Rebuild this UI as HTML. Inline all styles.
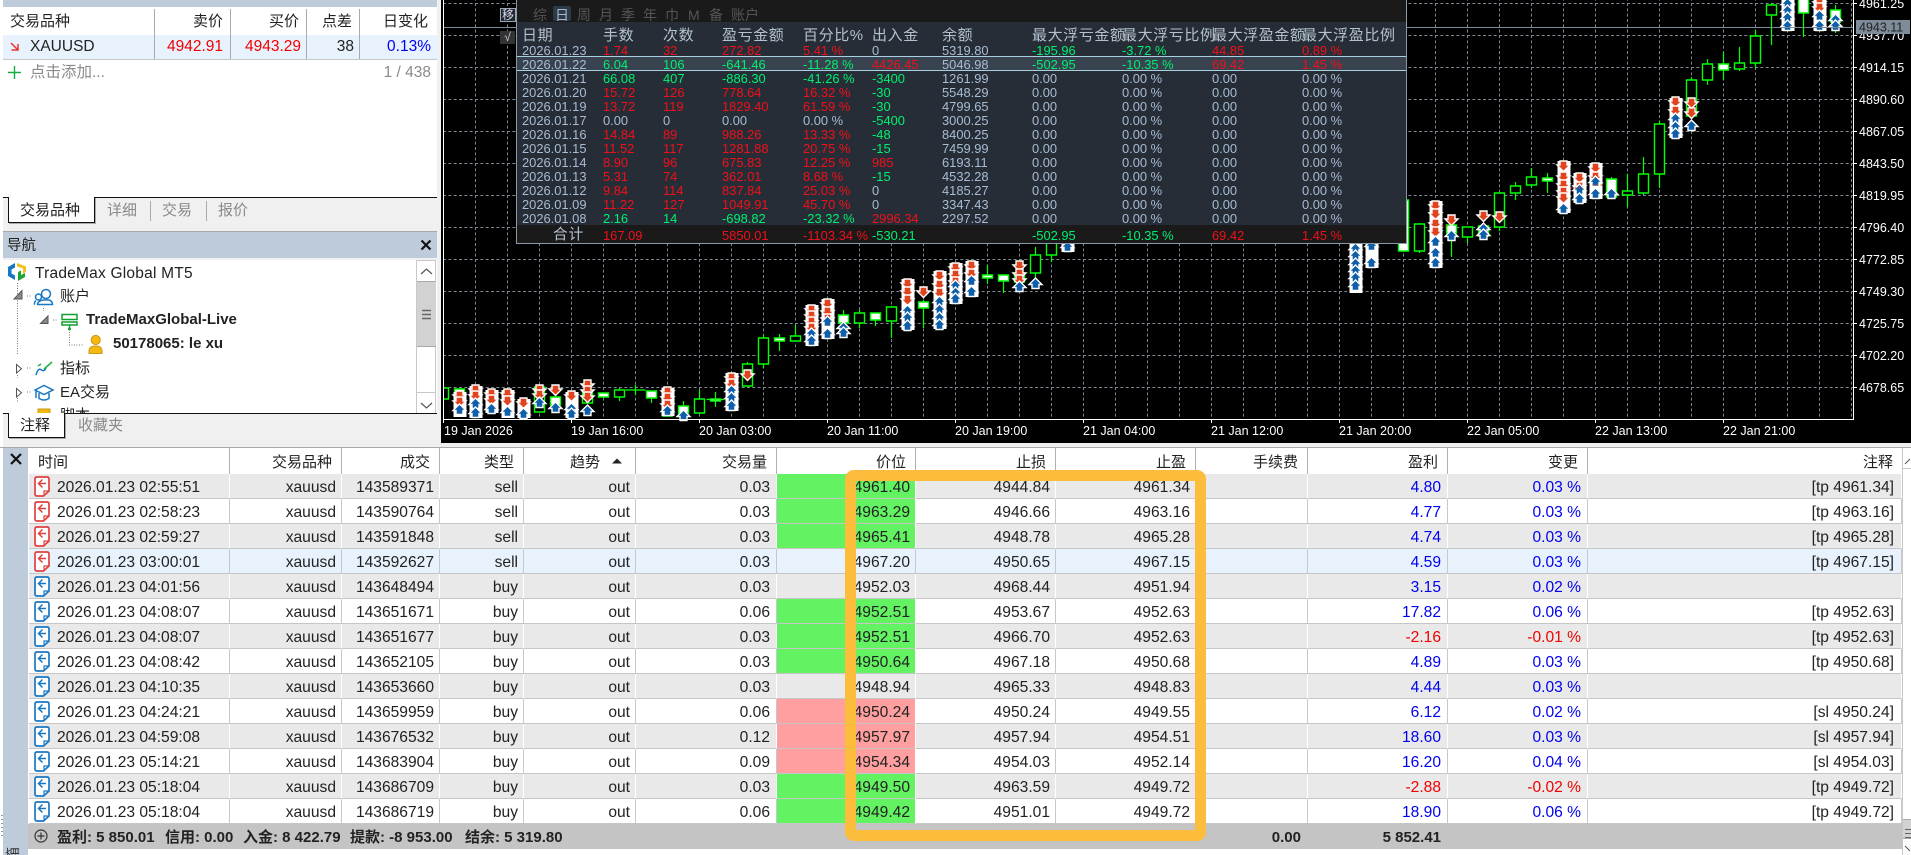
<!DOCTYPE html>
<html lang="zh"><head><meta charset="utf-8"><title>MT5</title>
<style>
html,body{margin:0;padding:0;background:#fff}
body{position:relative;width:1911px;height:855px;overflow:hidden;font:15.5px/20px "Liberation Sans","Noto Sans CJK SC",sans-serif;color:#222}
.a{position:absolute}
.t{position:absolute;white-space:nowrap;line-height:20px}
.rr{text-align:right}
#chart{position:absolute;left:441px;top:0;width:1470px;height:443px;overflow:hidden;background:#000}
#chart text{font:12.5px "Liberation Sans",sans-serif;fill:#fff}
.gy{color:#8a8a8a}
.d{position:absolute;width:1px;background:#aaa}
/* panel */
#pn{position:absolute;left:516px;top:0;width:889px;height:243px;background:#262d36;border:1px solid #8c9aa8;border-top:0}
#pt{position:absolute;left:522px;top:22px;table-layout:fixed;border-spacing:0;width:884px;font:12.9px/14px "Liberation Sans","Noto Sans CJK SC",sans-serif;color:#a8bcd4}
#pt td,#pt th{padding:0;white-space:nowrap;text-align:left;font-weight:400;height:14px}
#pt th{height:21px;box-sizing:border-box;padding-top:6px;font-size:15px;line-height:16px;letter-spacing:.6px;color:#b4c2d0}
#pt tr.f td{height:18px;line-height:19px}
.r{color:#f0101a}.g{color:#00f070}
/* table */
#tb{position:absolute;left:29px;top:448px;table-layout:fixed;border-spacing:0;width:1873px;font-size:15.6px;color:#222}
#tb th{height:26px;padding:4px 9px 0 0;text-align:right;font-weight:400;font-size:15px;border-right:1px solid #b0b0b0;box-sizing:border-box;background:#fff}
#tb td{height:25px;box-sizing:border-box;padding:3px 5px 0 0;text-align:right;white-space:nowrap;overflow:hidden;line-height:21px;border-bottom:1px solid #c6c6c6;border-right:1px solid #c8c8c8;position:relative}
#tb td:nth-child(6),#tb td:nth-child(11),#tb td:nth-child(12){padding-right:6px}
#tb td:nth-child(13){padding-right:7px}
#tb tr.z td{background:#e9e9e9;border-right-color:#fff}
#tb tr.s td{background:#e8f2fc;border-right-color:#c8c8c8}
#tb td.gc{background:#62f262!important;border-right-color:#fff}
#tb td.rc{background:#ff9f9f!important;border-right-color:#fff}
#tb td.tm{text-align:left;padding-left:28px}
#tb td.tm svg{position:absolute;left:5px;top:2px;width:16px;height:21px}
#tb td.b{color:#0000f0}#tb td.n{color:#f00000}
</style></head><body>

<!-- Left top strip -->
<div class="a" style="left:3px;top:0;width:434px;height:7px;background:#bdcbda"></div>
<div class="a" style="left:437px;top:0;width:4px;height:447px;background:#f0f0f0"></div>
<div class="a" style="left:0;top:0;width:3px;height:447px;background:#fff"></div>

<!-- Market watch -->
<div class="t" style="left:10px;top:12px;font-size:15px">交易品种</div>
<div class="t rr" style="right:1688px;top:12px;font-size:15px">卖价</div>
<div class="t rr" style="right:1612px;top:12px;font-size:15px">买价</div>
<div class="t rr" style="right:1559px;top:12px;font-size:15px">点差</div>
<div class="t rr" style="right:1483px;top:12px;font-size:15px">日变化</div>
<div class="a" style="left:3px;top:35px;width:434px;height:24px;background:#e8f2fc;border-bottom:1px solid #c8c8c8"></div>
<div class="d" style="left:154px;top:9px;height:50px"></div>
<div class="d" style="left:230px;top:9px;height:50px"></div>
<div class="d" style="left:306px;top:9px;height:50px"></div>
<div class="d" style="left:359px;top:9px;height:50px"></div>
<svg class="a" style="left:8px;top:40px" width="14" height="14" viewBox="8 40 14 14"><path d="M11 43L18 50M18 44V50H11.500" fill="none" stroke="#e8352f" stroke-width="1.500"/></svg>
<div class="t" style="left:30px;top:37px">XAUUSD</div>
<div class="t rr" style="right:1688px;top:37px;color:#f00000">4942.91</div>
<div class="t rr" style="right:1610px;top:37px;color:#f00000">4943.29</div>
<div class="t rr" style="right:1557px;top:37px">38</div>
<div class="t rr" style="right:1480px;top:37px;color:#0000f0">0.13%</div>
<svg class="a" style="left:8px;top:66px" width="14" height="14"><path d="M0 6.500H13M6.500 0V13" stroke="#12b040" stroke-width="1.400"/></svg>
<div class="t gy" style="left:30px;top:63px">点击添加...</div>
<div class="t gy rr" style="right:1480px;top:63px">1 / 438</div>

<!-- tabs 1 -->
<div class="a" style="left:3px;top:197px;width:434px;height:34px;background:#f0f0f0;border-top:1px solid #111;box-sizing:border-box"></div>
<div class="a" style="left:8px;top:197px;width:85px;height:25px;background:#fff;border:1px solid #111;border-top:0;box-shadow:1px 1px 0 #aaa"></div>
<div class="t" style="left:20px;top:201px;font-size:15px">交易品种</div>
<div class="t gy" style="left:107px;top:201px;font-size:15px">详细</div>
<div class="t gy" style="left:162px;top:201px;font-size:15px">交易</div>
<div class="t gy" style="left:218px;top:201px;font-size:15px">报价</div>
<div class="d" style="left:150px;top:201px;height:20px"></div>
<div class="d" style="left:206px;top:201px;height:20px"></div>

<!-- navigator -->
<div class="a" style="left:3px;top:231px;width:434px;height:1px;background:#a8a8a8"></div>
<div class="a" style="left:3px;top:232px;width:434px;height:26px;background:#bdcbda"></div>
<div class="a" style="left:3px;top:258px;width:434px;height:2px;background:#f0f0f0"></div>
<div class="t" style="left:7px;top:236px;font-size:14.500px">导航</div>
<svg class="a" style="left:420px;top:239px" width="12" height="12"><path d="M1.500 1.500L10.500 10.500M10.500 1.500L1.500 10.500" stroke="#111" stroke-width="2.200"/></svg>

<svg class="a" style="left:0;top:260px" width="416" height="153" viewBox="0 260 416 153">
<path d="M17.500 283V355M17.500 375v3M17.500 398v4M27 296h5M27 368h5M27 392h5M43.500 308v3M53 320h5M69.500 332V345H84" fill="none" stroke="#777" stroke-dasharray="1 1.500"/>
<path d="M15 263L8 267V276L15 280V275.500L11.500 273.500V269.500L15 267.500Z" fill="#1878c8"/>
<path d="M17 263L26 266.500V272L23 273.500V268.500L17 266.500Z" fill="#f4c020"/>
<path d="M18 281L25 277V273L21 275V270.500L18 272Z" fill="#1ea535"/>
<path d="M22 290.500V299H14Z" fill="#8a8a8a" stroke="#555"/>
<path d="M48 316V323.500H40.500Z" fill="#8a8a8a" stroke="#555"/>
<path d="M16.500 364.500V373L21.500 368.800Z M16.500 388.500V397L21.500 392.800Z" fill="#fff" stroke="#555"/>
<g fill="none" stroke="#1a78c2" stroke-width="1.500">
<circle cx="46" cy="294" r="4.500"/><circle cx="38.500" cy="297" r="3"/>
<path d="M37.500 304.500Q37.500 301 43 300H49Q52.500 301 52.500 304.500ZM35 304H34.500Q34.500 301 36 300.800"/>
<path d="M35 390L44 385.500L53 390L44 394.500ZM39 393V398.500Q44 401.500 49 398.500V393M36 391V398"/>
<path d="M36 375C40 362 42 376 46 368" stroke="#1478c0"/>
</g>
<path d="M44 369L52 362M38 366l3 -2" fill="none" stroke="#20b040" stroke-width="1.500"/>
<g fill="none" stroke="#10a030" stroke-width="1.500"><rect x="62" y="314.500" width="15" height="5"/><rect x="62" y="322" width="15" height="3"/><path d="M69.500 325V329"/></g>
<circle cx="69.500" cy="329" r="1.500" fill="#10a030"/>
<circle cx="95.700" cy="340" r="4.600" fill="#f5b80e" stroke="#c79a16"/>
<path d="M89 353.500V351Q89 346 95.500 346T102 351V353.500Z" fill="#f5b80e" stroke="#c79a16"/>
<rect x="38" y="409" width="12" height="6" fill="#f5b80e" stroke="#c79a16"/>
</svg>
<div class="t" style="left:35px;top:264px;letter-spacing:.22px">TradeMax Global MT5</div>
<div class="t" style="left:60px;top:287px;font-size:15px">账户</div>
<div class="t" style="left:86px;top:310px;font-weight:700;font-size:15px">TradeMaxGlobal-Live</div>
<div class="t" style="left:113px;top:334px;font-weight:700;font-size:15px">50178065: le xu</div>
<div class="t" style="left:60px;top:359px;font-size:15px">指标</div>
<div class="t" style="left:60px;top:383px;font-size:15px">EA交易</div>
<div class="a" style="left:60px;top:406px;height:7px;width:40px;overflow:hidden"><div class="t" style="left:0;top:0;font-size:15px">脚本</div></div>
<!-- nav scroll -->
<div class="a" style="left:416px;top:260px;width:20px;height:153px;background:#fff;border:1px solid #c8c8c8;border-bottom:0;box-sizing:border-box"></div>
<div class="a" style="left:417px;top:281px;width:19px;height:66px;background:#d2d2d2;border-top:1px solid #aaa;border-bottom:1px solid #aaa;box-sizing:border-box"></div>
<div class="a" style="left:417px;top:392px;width:19px;height:1px;background:#c8c8c8"></div>
<svg class="a" style="left:417px;top:260px" width="19" height="153"><path d="M4 14L9.500 9L15 14M4 143L9.500 148L15 143" fill="none" stroke="#555" stroke-width="1.200"/><path d="M5 50.500H14M5 54.500H14M5 58.500H14" stroke="#666" stroke-width="1.500"/></svg>

<!-- tabs 2 -->
<div class="a" style="left:3px;top:413px;width:434px;height:34px;background:#f0f0f0;border-top:1px solid #111;box-sizing:border-box"></div>
<div class="a" style="left:8px;top:413px;width:55px;height:24px;background:#fff;border:1px solid #111;border-top:0;box-shadow:1px 1px 0 #aaa"></div>
<div class="t" style="left:20px;top:416px;font-size:15px">注释</div>
<div class="t gy" style="left:78px;top:416px;font-size:15px">收藏夹</div>

<!-- Chart -->
<div id="chart">
<svg width="1470" height="443" viewBox="441 0 1470 443" style="display:block">
<defs>
<pattern id="gr" x="443" y="3" width="32" height="32" patternUnits="userSpaceOnUse">
<path d="M0 .5H32M.5 0V32" stroke="#7c8794" stroke-dasharray="3 2.330" fill="none"/>
</pattern>
<path id="d" d="M-3.500 0H3.500V4H6.500L0 10.500L-6.500 4H-3.500Z" fill="#e0441f" stroke="#fff" stroke-width="1.400"/>
<path id="u" d="M0 0L6.500 6.500H3.500V10.500H-3.500V6.500H-6.500Z" fill="#0e5ea8" stroke="#fff" stroke-width="1.400"/>
</defs>
<rect x="443" y="0" width="1410" height="419" fill="url(#gr)"/>
<!-- wicks -->
<g transform="translate(.5 0)">
<path fill="none" stroke="#00ff00" stroke-width="1.200" d="M619 388V401M635 385V395M651 391V403M683 401V413M699 390V399M715 392V407M747 362V386M763 335V368M779 334V351M795 325V341M843 310V323M859 310V328M875 313V326M891 306V338M923 300V328M987 265V284M1003 275V293M1035 247V278M1051 243V262M1419 223V253M1451 233V257M1467 237V243M1499 227V231M1515 182V200M1531 168V188M1547 173V193M1611 177V197M1627 174V207M1643 157V195M1659 121V188M1691 77V116M1707 59V85M1723 52V80M1739 47V71M1755 30V68M1771 3V45M1803 0V37M1835 5V33M1403 200V252"/>
<path fill="none" stroke="#00ff00" stroke-width="1.200" d="M625 390h20M706 399.500h18"/>
<!-- empty bodies -->
<path fill="#000" stroke="#00ff00" stroke-width="1.400" d="M438 388h10v11h-10zM534 387h10v25h-10zM582 393h10v10h-10zM614 390h10v7h-10zM662 398h10v18h-10zM694 399h10v14h-10zM742 364h10v22h-10zM758 338h10v26h-10zM790 336h10v5h-10zM854 313h10v10h-10zM886 307h10v14h-10zM1014 273h10v9h-10zM1030 255h10v18h-10zM1046 230h10v25h-10zM1414 224h10v27h-10zM1462 227h10v10h-10zM1478 226h10v10h-10zM1494 193h10v34h-10zM1510 186h10v7h-10zM1526 177h10v8h-10zM1574 184h10v8h-10zM1622 191h10v4h-10zM1638 174h10v19h-10zM1654 124h10v50h-10zM1686 80h10v36h-10zM1702 64h10v16h-10zM1734 63h10v6h-10zM1750 36h10v27h-10zM1766 5h10v10h-10z"/>
<!-- filled bodies -->
<path fill="#fff" stroke="#00ff00" stroke-width="1.400" d="M454 389h10v10h-10zM502 401h10v10h-10zM518 407h10v10h-10zM550 397h10v8h-10zM598 393h10v4h-10zM646 391h10v7h-10zM678 406h10v7h-10zM710 399h10v2h-10zM774 338h10v3h-10zM838 315h10v8h-10zM870 313h10v7h-10zM918 302h10v6h-10zM982 275h10v3h-10zM998 275h10v6h-10zM1398 200h10v51h-10zM1446 225h10v8h-10zM1542 178h10v3h-10zM1606 179h10v18h-10zM1718 64h10v6h-10zM1798 -2h10v15h-10zM1830 10h10v12h-10z"/>
<!-- white underlay of dense marker stacks -->
<path fill="#fff" d="M453 392h13v25h-13zM469 386h13v32h-13zM485 390h13v23h-13zM501 390h13v28h-13zM517 399h13v19h-13zM565 392h13v26h-13zM661 388h13v28h-13zM725 373h13v38h-13zM805 305h13v41h-13zM821 299h13v40h-13zM901 279h13v51h-13zM933 271h13v58h-13zM949 263h13v41h-13zM965 261h13v36h-13zM1061 240h13v12h-13zM1349 240h13v53h-13zM1365 240h13v28h-13zM1429 201h13v67h-13zM1557 161h13v52h-13zM1573 173h13v30h-13zM1589 163h13v36h-13zM1669 98h13v40h-13zM1781 -2h13v33h-13zM1813 -2h13v33h-13z"/>
<!-- down markers -->
<use href="#d" x="459" y="391"/><use href="#d" x="459" y="397"/>
<use href="#d" x="475" y="385"/><use href="#d" x="475" y="391"/>
<use href="#d" x="491" y="389"/><use href="#d" x="491" y="395"/>
<use href="#d" x="507" y="389"/><use href="#d" x="507" y="396"/>
<use href="#d" x="523" y="398"/><use href="#d" x="539" y="385"/><use href="#d" x="539" y="390"/>
<use href="#d" x="555" y="385"/><use href="#d" x="571" y="391"/>
<use href="#d" x="587" y="380"/><use href="#d" x="587" y="386"/><use href="#d" x="587" y="392"/>
<use href="#d" x="667" y="387"/><use href="#d" x="667" y="393"/><use href="#d" x="667" y="400"/>
<use href="#d" x="731" y="373"/><use href="#d" x="731" y="379"/><use href="#d" x="747" y="370"/>
<use href="#d" x="811" y="305"/><use href="#d" x="811" y="311"/><use href="#d" x="811" y="317"/><use href="#d" x="811" y="323"/>
<use href="#d" x="827" y="299"/><use href="#d" x="827" y="307"/><use href="#d" x="827" y="314"/>
<use href="#d" x="907" y="279"/><use href="#d" x="907" y="287"/><use href="#d" x="907" y="295"/>
<use href="#d" x="923" y="287"/>
<use href="#d" x="939" y="271"/><use href="#d" x="939" y="280"/><use href="#d" x="939" y="288"/>
<use href="#d" x="955" y="263"/><use href="#d" x="955" y="270"/><use href="#d" x="955" y="277"/>
<use href="#d" x="971" y="261"/><use href="#d" x="971" y="269"/>
<use href="#d" x="1019" y="261"/><use href="#d" x="1019" y="269"/><use href="#d" x="1019" y="275"/>
<use href="#d" x="1435" y="201"/><use href="#d" x="1435" y="209"/><use href="#d" x="1435" y="219"/><use href="#d" x="1435" y="227"/>
<use href="#d" x="1451" y="215"/><use href="#d" x="1483" y="211"/><use href="#d" x="1499" y="212"/>
<use href="#d" x="1563" y="161"/><use href="#d" x="1563" y="172"/><use href="#d" x="1563" y="180"/><use href="#d" x="1563" y="187"/><use href="#d" x="1563" y="193"/>
<use href="#d" x="1579" y="173"/><use href="#d" x="1579" y="182"/>
<use href="#d" x="1595" y="163"/><use href="#d" x="1595" y="172"/>
<use href="#d" x="1675" y="97"/><use href="#d" x="1675" y="106"/>
<use href="#d" x="1691" y="98"/><use href="#d" x="1691" y="108"/>
<use href="#d" x="1819" y="-2"/><use href="#d" x="1819" y="3"/>
<!-- up markers -->
<use href="#u" x="459" y="404"/><use href="#u" x="475" y="398"/><use href="#u" x="475" y="407"/>
<use href="#u" x="491" y="403"/><use href="#u" x="507" y="406"/><use href="#u" x="523" y="408"/>
<use href="#u" x="539" y="397"/><use href="#u" x="555" y="402"/><use href="#u" x="571" y="403"/><use href="#u" x="571" y="408"/>
<use href="#u" x="587" y="405"/><use href="#u" x="667" y="405"/><use href="#u" x="683" y="410"/>
<use href="#u" x="731" y="385"/><use href="#u" x="731" y="392"/><use href="#u" x="731" y="400"/>
<use href="#u" x="811" y="328"/><use href="#u" x="811" y="335"/>
<use href="#u" x="827" y="316"/><use href="#u" x="827" y="328"/>
<use href="#u" x="843" y="322"/><use href="#u" x="843" y="327"/>
<use href="#u" x="907" y="305"/><use href="#u" x="907" y="312"/><use href="#u" x="907" y="320"/>
<use href="#u" x="939" y="296"/><use href="#u" x="939" y="304"/><use href="#u" x="939" y="312"/><use href="#u" x="939" y="319"/>
<use href="#u" x="955" y="280"/><use href="#u" x="955" y="287"/><use href="#u" x="955" y="293"/>
<use href="#u" x="971" y="275"/><use href="#u" x="971" y="286"/>
<use href="#u" x="1019" y="281"/><use href="#u" x="1035" y="278"/><use href="#u" x="1067" y="241"/>
<use href="#u" x="1355" y="243"/><use href="#u" x="1355" y="250"/><use href="#u" x="1355" y="258"/><use href="#u" x="1355" y="265"/><use href="#u" x="1355" y="272"/><use href="#u" x="1355" y="280"/>
<use href="#u" x="1371" y="240"/><use href="#u" x="1371" y="257"/><use href="#u" x="1451" y="230"/>
<use href="#u" x="1435" y="236"/><use href="#u" x="1435" y="247"/><use href="#u" x="1435" y="257"/>
<use href="#u" x="1483" y="223"/><use href="#u" x="1483" y="229"/>
<use href="#u" x="1563" y="203"/><use href="#u" x="1579" y="184"/><use href="#u" x="1579" y="193"/>
<use href="#u" x="1595" y="176"/><use href="#u" x="1595" y="188"/><use href="#u" x="1611" y="188"/>
<use href="#u" x="1675" y="113"/><use href="#u" x="1675" y="121"/><use href="#u" x="1675" y="128"/>
<use href="#u" x="1691" y="120"/>
<use href="#u" x="1787" y="-2"/><use href="#u" x="1787" y="5"/><use href="#u" x="1787" y="12"/><use href="#u" x="1787" y="20"/>
<use href="#u" x="1819" y="10"/><use href="#u" x="1819" y="20"/><use href="#u" x="1835" y="14"/><use href="#u" x="1835" y="20"/>
<path d="M1441 226h8M1570 188h10M1592 185h10M1688 109h8" stroke="#e0441f" stroke-dasharray="2 2" fill="none"/>
</g>
<rect x="441" y="0" width="2" height="419" fill="#000"/>
<!-- current price -->
<path d="M443 27.500H1853" stroke="#7c8b99"/>
<!-- axes -->
<path d="M443.500 0V419.500H1853.500V0" fill="none" stroke="#fff"/>
<path stroke="#fff" d="M443.500 419v4M571.500 419v4M699.500 419v4M827.500 419v4M955.500 419v4M1083.500 419v4M1211.500 419v4M1339.500 419v4M1467.500 419v4M1595.500 419v4M1723.500 419v4M1853 3.500h4M1853 35.500h4M1853 67.500h4M1853 99.500h4M1853 131.500h4M1853 163.500h4M1853 195.500h4M1853 227.500h4M1853 259.500h4M1853 291.500h4M1853 323.500h4M1853 355.500h4M1853 387.500h4"/>
<text x="1859" y="8">4961.25</text><text x="1859" y="40">4937.70</text>
<rect x="1856" y="20" width="54" height="14" fill="#7e8c9a"/>
<text x="1859" y="31.500" style="fill:#222">4943.11</text>
<text x="1859" y="72">4914.15</text><text x="1859" y="104">4890.60</text><text x="1859" y="136">4867.05</text><text x="1859" y="168">4843.50</text><text x="1859" y="200">4819.95</text><text x="1859" y="232">4796.40</text><text x="1859" y="264">4772.85</text><text x="1859" y="296">4749.30</text><text x="1859" y="328">4725.75</text><text x="1859" y="360">4702.20</text><text x="1859" y="392">4678.65</text>
<text x="444" y="435">19 Jan 2026</text><text x="571" y="435">19 Jan 16:00</text><text x="699" y="435">20 Jan 03:00</text><text x="827" y="435">20 Jan 11:00</text><text x="955" y="435">20 Jan 19:00</text><text x="1083" y="435">21 Jan 04:00</text><text x="1211" y="435">21 Jan 12:00</text><text x="1339" y="435">21 Jan 20:00</text><text x="1467" y="435">22 Jan 05:00</text><text x="1595" y="435">22 Jan 13:00</text><text x="1723" y="435">22 Jan 21:00</text>
</svg>
</div>

<!-- small buttons -->
<div class="a" style="left:500px;top:8px;width:14px;height:12px;border:1px solid #9aa6b2;background:#20262d;color:#dde;font-size:12px;line-height:12px;text-align:center">移</div>
<div class="a" style="left:500px;top:31px;width:15px;height:13px;background:#333;color:#ccd;font-size:12px;line-height:13px;text-align:center">√</div>

<!-- overlay panel -->
<div id="pn">
<div class="a" style="left:0;top:0;right:0;height:22px;background:#1a1a1a"></div>
<div class="a" style="left:0;right:0;top:225px;height:18px;background:#1a1a1a"></div>
<div class="a" style="left:0;right:0;top:56px;height:13px;background:#39434f;border-top:1px solid #a8d0e0;border-bottom:1px solid #a8d0e0"></div>
<div class="a" style="left:36px;top:6px;width:18px;height:15px;background:#2c3a48;border-radius:2px"></div>
</div>
<div class="t" style="left:533px;top:5px;font-size:14px;color:#555">综</div>
<div class="t" style="left:555px;top:5px;font-size:14px;color:#a8bacc">日</div>
<div class="t" style="left:577px;top:5px;font-size:14px;color:#555">周</div>
<div class="t" style="left:599px;top:5px;font-size:14px;color:#555">月</div>
<div class="t" style="left:621px;top:5px;font-size:14px;color:#555">季</div>
<div class="t" style="left:643px;top:5px;font-size:14px;color:#555">年</div>
<div class="t" style="left:665px;top:5px;font-size:14px;color:#555">巾</div>
<div class="t" style="left:688px;top:5px;font-size:14px;color:#555">M</div>
<div class="t" style="left:709px;top:5px;font-size:14px;color:#555">备</div>
<div class="t" style="left:731px;top:5px;font-size:14px;color:#555">账户</div>
<table id="pt">
<colgroup><col style="width:81px"><col style="width:60px"><col style="width:59px"><col style="width:81px"><col style="width:69px"><col style="width:70px"><col style="width:90px"><col style="width:90px"><col style="width:90px"><col style="width:90px"><col style="width:104px"></colgroup>
<tr><th>日期</th><th>手数</th><th>次数</th><th>盈亏金额</th><th>百分比%</th><th>出入金</th><th>余额</th><th>最大浮亏金额</th><th>最大浮亏比例</th><th>最大浮盈金额</th><th>最大浮盈比例</th></tr>
<tr><td>2026.01.23</td><td class="r">1.74</td><td class="r">32</td><td class="r">272.82</td><td class="r">5.41 %</td><td>0</td><td>5319.80</td><td class="g">-195.96</td><td class="g">-3.72 %</td><td class="r">44.85</td><td class="r">0.89 %</td></tr>
<tr><td>2026.01.22</td><td class="g">6.04</td><td class="g">106</td><td class="g">-641.46</td><td class="g">-11.28 %</td><td class="r">4426.45</td><td>5046.98</td><td class="g">-502.95</td><td class="g">-10.35 %</td><td class="r">69.42</td><td class="r">1.45 %</td></tr>
<tr><td>2026.01.21</td><td class="g">66.08</td><td class="g">407</td><td class="g">-886.30</td><td class="g">-41.26 %</td><td class="g">-3400</td><td>1261.99</td><td>0.00</td><td>0.00 %</td><td>0.00</td><td>0.00 %</td></tr>
<tr><td>2026.01.20</td><td class="r">15.72</td><td class="r">126</td><td class="r">778.64</td><td class="r">16.32 %</td><td class="g">-30</td><td>5548.29</td><td>0.00</td><td>0.00 %</td><td>0.00</td><td>0.00 %</td></tr>
<tr><td>2026.01.19</td><td class="r">13.72</td><td class="r">119</td><td class="r">1829.40</td><td class="r">61.59 %</td><td class="g">-30</td><td>4799.65</td><td>0.00</td><td>0.00 %</td><td>0.00</td><td>0.00 %</td></tr>
<tr><td>2026.01.17</td><td>0.00</td><td>0</td><td>0.00</td><td>0.00 %</td><td class="g">-5400</td><td>3000.25</td><td>0.00</td><td>0.00 %</td><td>0.00</td><td>0.00 %</td></tr>
<tr><td>2026.01.16</td><td class="r">14.84</td><td class="r">89</td><td class="r">988.26</td><td class="r">13.33 %</td><td class="g">-48</td><td>8400.25</td><td>0.00</td><td>0.00 %</td><td>0.00</td><td>0.00 %</td></tr>
<tr><td>2026.01.15</td><td class="r">11.52</td><td class="r">117</td><td class="r">1281.88</td><td class="r">20.75 %</td><td class="g">-15</td><td>7459.99</td><td>0.00</td><td>0.00 %</td><td>0.00</td><td>0.00 %</td></tr>
<tr><td>2026.01.14</td><td class="r">8.90</td><td class="r">96</td><td class="r">675.83</td><td class="r">12.25 %</td><td class="r">985</td><td>6193.11</td><td>0.00</td><td>0.00 %</td><td>0.00</td><td>0.00 %</td></tr>
<tr><td>2026.01.13</td><td class="r">5.31</td><td class="r">74</td><td class="r">362.01</td><td class="r">8.68 %</td><td class="g">-15</td><td>4532.28</td><td>0.00</td><td>0.00 %</td><td>0.00</td><td>0.00 %</td></tr>
<tr><td>2026.01.12</td><td class="r">9.84</td><td class="r">114</td><td class="r">837.84</td><td class="r">25.03 %</td><td>0</td><td>4185.27</td><td>0.00</td><td>0.00 %</td><td>0.00</td><td>0.00 %</td></tr>
<tr><td>2026.01.09</td><td class="r">11.22</td><td class="r">127</td><td class="r">1049.91</td><td class="r">45.70 %</td><td>0</td><td>3347.43</td><td>0.00</td><td>0.00 %</td><td>0.00</td><td>0.00 %</td></tr>
<tr><td>2026.01.08</td><td class="g">2.16</td><td class="g">14</td><td class="g">-698.82</td><td class="g">-23.32 %</td><td class="r">2996.34</td><td>2297.52</td><td>0.00</td><td>0.00 %</td><td>0.00</td><td>0.00 %</td></tr>
<tr class="f"><td style="padding-left:31px;font-size:14.6px;letter-spacing:1px;color:#b4c2d0">合计</td><td class="r">167.09</td><td></td><td class="r">5850.01</td><td class="r">-1103.34 %</td><td class="g">-530.21</td><td></td><td class="g">-502.95</td><td class="g">-10.35 %</td><td class="r">69.42</td><td class="r">1.45 %</td></tr>
</table>

<!-- Bottom area -->
<div class="a" style="left:441px;top:443px;width:1470px;height:4px;background:#f0f0f0"></div>
<div class="a" style="left:0;top:447px;width:1911px;height:1px;background:#a8a8a8"></div>
<div class="a" style="left:3px;top:448px;width:25px;height:407px;background:#bdcbda"></div>
<svg class="a" style="left:9px;top:452px" width="14" height="14"><path d="M2 2L12 12M12 2L2 12" stroke="#111" stroke-width="2.200"/></svg>
<div class="a" style="left:1px;top:815px;width:2px;height:22px;background:repeating-linear-gradient(#999 0 1px,#fff 1px 4px)"></div>
<div class="a" style="left:5px;top:846px;width:18px;height:9px;overflow:hidden"><div class="a" style="left:1px;top:0;font-size:14px;line-height:16px;transform:rotate(-90deg);color:#333">箱</div></div>

<svg width="0" height="0" style="position:absolute"><defs>
<symbol id="ic" viewBox="0 0 16 21"><path d="M3 1H13Q15 1 15 3V15L9.500 20H3Q1 20 1 18V3Q1 1 3 1Z" fill="#fff" stroke="currentColor" stroke-width="1.700"/><path d="M15 15H10V20" fill="none" stroke="currentColor" stroke-width="1.200"/><path d="M12 7.500H4.500M8.500 3.500L4.500 7.500L8.500 11.500" fill="none" stroke="currentColor" stroke-width="1.500"/></symbol>
</defs></svg>

<table id="tb">
<colgroup><col style="width:201px"><col style="width:112px"><col style="width:98px"><col style="width:84px"><col style="width:112px"><col style="width:141px"><col style="width:139px"><col style="width:140px"><col style="width:140px"><col style="width:112px"><col style="width:140px"><col style="width:140px"><col style="width:314px"></colgroup>
<tr><th style="text-align:left;padding-left:9px">时间</th><th>交易品种</th><th>成交</th><th>类型</th><th style="padding-right:35px">趋势</th><th>交易量</th><th>价位</th><th>止损</th><th>止盈</th><th>手续费</th><th>盈利</th><th>变更</th><th style="border-right:0">注释</th></tr>
<tr class="z"><td class="tm"><svg style="color:#e04040"><use href="#ic"/></svg>2026.01.23 02:55:51</td><td>xauusd</td><td>143589371</td><td>sell</td><td>out</td><td>0.03</td><td class="gc">4961.40</td><td>4944.84</td><td>4961.34</td><td></td><td class="b">4.80</td><td class="b">0.03 %</td><td>[tp 4961.34]</td></tr>
<tr><td class="tm"><svg style="color:#e04040"><use href="#ic"/></svg>2026.01.23 02:58:23</td><td>xauusd</td><td>143590764</td><td>sell</td><td>out</td><td>0.03</td><td class="gc">4963.29</td><td>4946.66</td><td>4963.16</td><td></td><td class="b">4.77</td><td class="b">0.03 %</td><td>[tp 4963.16]</td></tr>
<tr class="z"><td class="tm"><svg style="color:#e04040"><use href="#ic"/></svg>2026.01.23 02:59:27</td><td>xauusd</td><td>143591848</td><td>sell</td><td>out</td><td>0.03</td><td class="gc">4965.41</td><td>4948.78</td><td>4965.28</td><td></td><td class="b">4.74</td><td class="b">0.03 %</td><td>[tp 4965.28]</td></tr>
<tr class="s"><td class="tm"><svg style="color:#e04040"><use href="#ic"/></svg>2026.01.23 03:00:01</td><td>xauusd</td><td>143592627</td><td>sell</td><td>out</td><td>0.03</td><td>4967.20</td><td>4950.65</td><td>4967.15</td><td></td><td class="b">4.59</td><td class="b">0.03 %</td><td>[tp 4967.15]</td></tr>
<tr class="z"><td class="tm"><svg style="color:#1a78c2"><use href="#ic"/></svg>2026.01.23 04:01:56</td><td>xauusd</td><td>143648494</td><td>buy</td><td>out</td><td>0.03</td><td>4952.03</td><td>4968.44</td><td>4951.94</td><td></td><td class="b">3.15</td><td class="b">0.02 %</td><td></td></tr>
<tr><td class="tm"><svg style="color:#1a78c2"><use href="#ic"/></svg>2026.01.23 04:08:07</td><td>xauusd</td><td>143651671</td><td>buy</td><td>out</td><td>0.06</td><td class="gc">4952.51</td><td>4953.67</td><td>4952.63</td><td></td><td class="b">17.82</td><td class="b">0.06 %</td><td>[tp 4952.63]</td></tr>
<tr class="z"><td class="tm"><svg style="color:#1a78c2"><use href="#ic"/></svg>2026.01.23 04:08:07</td><td>xauusd</td><td>143651677</td><td>buy</td><td>out</td><td>0.03</td><td class="gc">4952.51</td><td>4966.70</td><td>4952.63</td><td></td><td class="n">-2.16</td><td class="n">-0.01 %</td><td>[tp 4952.63]</td></tr>
<tr><td class="tm"><svg style="color:#1a78c2"><use href="#ic"/></svg>2026.01.23 04:08:42</td><td>xauusd</td><td>143652105</td><td>buy</td><td>out</td><td>0.03</td><td class="gc">4950.64</td><td>4967.18</td><td>4950.68</td><td></td><td class="b">4.89</td><td class="b">0.03 %</td><td>[tp 4950.68]</td></tr>
<tr class="z"><td class="tm"><svg style="color:#1a78c2"><use href="#ic"/></svg>2026.01.23 04:10:35</td><td>xauusd</td><td>143653660</td><td>buy</td><td>out</td><td>0.03</td><td>4948.94</td><td>4965.33</td><td>4948.83</td><td></td><td class="b">4.44</td><td class="b">0.03 %</td><td></td></tr>
<tr><td class="tm"><svg style="color:#1a78c2"><use href="#ic"/></svg>2026.01.23 04:24:21</td><td>xauusd</td><td>143659959</td><td>buy</td><td>out</td><td>0.06</td><td class="rc">4950.24</td><td>4950.24</td><td>4949.55</td><td></td><td class="b">6.12</td><td class="b">0.02 %</td><td>[sl 4950.24]</td></tr>
<tr class="z"><td class="tm"><svg style="color:#1a78c2"><use href="#ic"/></svg>2026.01.23 04:59:08</td><td>xauusd</td><td>143676532</td><td>buy</td><td>out</td><td>0.12</td><td class="rc">4957.97</td><td>4957.94</td><td>4954.51</td><td></td><td class="b">18.60</td><td class="b">0.03 %</td><td>[sl 4957.94]</td></tr>
<tr><td class="tm"><svg style="color:#1a78c2"><use href="#ic"/></svg>2026.01.23 05:14:21</td><td>xauusd</td><td>143683904</td><td>buy</td><td>out</td><td>0.09</td><td class="rc">4954.34</td><td>4954.03</td><td>4952.14</td><td></td><td class="b">16.20</td><td class="b">0.04 %</td><td>[sl 4954.03]</td></tr>
<tr class="z"><td class="tm"><svg style="color:#1a78c2"><use href="#ic"/></svg>2026.01.23 05:18:04</td><td>xauusd</td><td>143686709</td><td>buy</td><td>out</td><td>0.03</td><td class="gc">4949.50</td><td>4963.59</td><td>4949.72</td><td></td><td class="n">-2.88</td><td class="n">-0.02 %</td><td>[tp 4949.72]</td></tr>
<tr><td class="tm"><svg style="color:#1a78c2"><use href="#ic"/></svg>2026.01.23 05:18:04</td><td>xauusd</td><td>143686719</td><td>buy</td><td>out</td><td>0.06</td><td class="gc">4949.42</td><td>4951.01</td><td>4949.72</td><td></td><td class="b">18.90</td><td class="b">0.06 %</td><td>[tp 4949.72]</td></tr>
</table>
<svg class="a" style="left:612px;top:458px" width="10" height="6"><path d="M0 5.500L5 0.500L10 5.500Z" fill="#222"/></svg>

<!-- footer -->
<div class="a" style="left:28px;top:824px;width:1874px;height:25px;background:#c4c4c4"></div>
<svg class="a" style="left:34px;top:829px" width="14" height="14"><circle cx="7" cy="7" r="6" fill="none" stroke="#333" stroke-width="1.200"/><path d="M3.500 7H10.500M7 3.500V10.500" stroke="#333" stroke-width="1.200"/></svg>
<div class="t" style="left:57px;top:828px;font-weight:700;font-size:15px">盈利: 5 850.01</div>
<div class="t" style="left:165px;top:828px;font-weight:700;font-size:15px">信用: 0.00</div>
<div class="t" style="left:243px;top:828px;font-weight:700;font-size:15px">入金: 8 422.79</div>
<div class="t" style="left:350px;top:828px;font-weight:700;font-size:15px">提款: -8 953.00</div>
<div class="t" style="left:465px;top:828px;font-weight:700;font-size:15px">结余: 5 319.80</div>
<div class="t rr" style="right:610px;top:828px;font-weight:700;font-size:15px">0.00</div>
<div class="t rr" style="right:470px;top:828px;font-weight:700;font-size:15px">5 852.41</div>

<!-- table scrollbar -->
<div class="a" style="left:1902px;top:448px;width:9px;height:407px;background:#fff;border-left:1px solid #c8c8c8;box-sizing:border-box"></div>
<div class="a" style="left:1903px;top:468px;width:8px;height:1px;background:#c8c8c8"></div>
<div class="a" style="left:1903px;top:819px;width:8px;height:20px;background:#d2d2d2;border-top:1px solid #aaa;border-bottom:1px solid #aaa;box-sizing:border-box"></div>
<svg class="a" style="left:1903px;top:448px" width="8" height="407"><path d="M2 16L7 11M2 398L7 403" fill="none" stroke="#555"/><path d="M2 381.500H8M2 385.500H8M2 389.500H8" stroke="#666"/></svg>

<!-- orange highlight -->
<div class="a" style="left:845px;top:470px;width:361px;height:371px;box-sizing:border-box;border:11px solid #fdbd3c;border-radius:9px"></div>

</body></html>
